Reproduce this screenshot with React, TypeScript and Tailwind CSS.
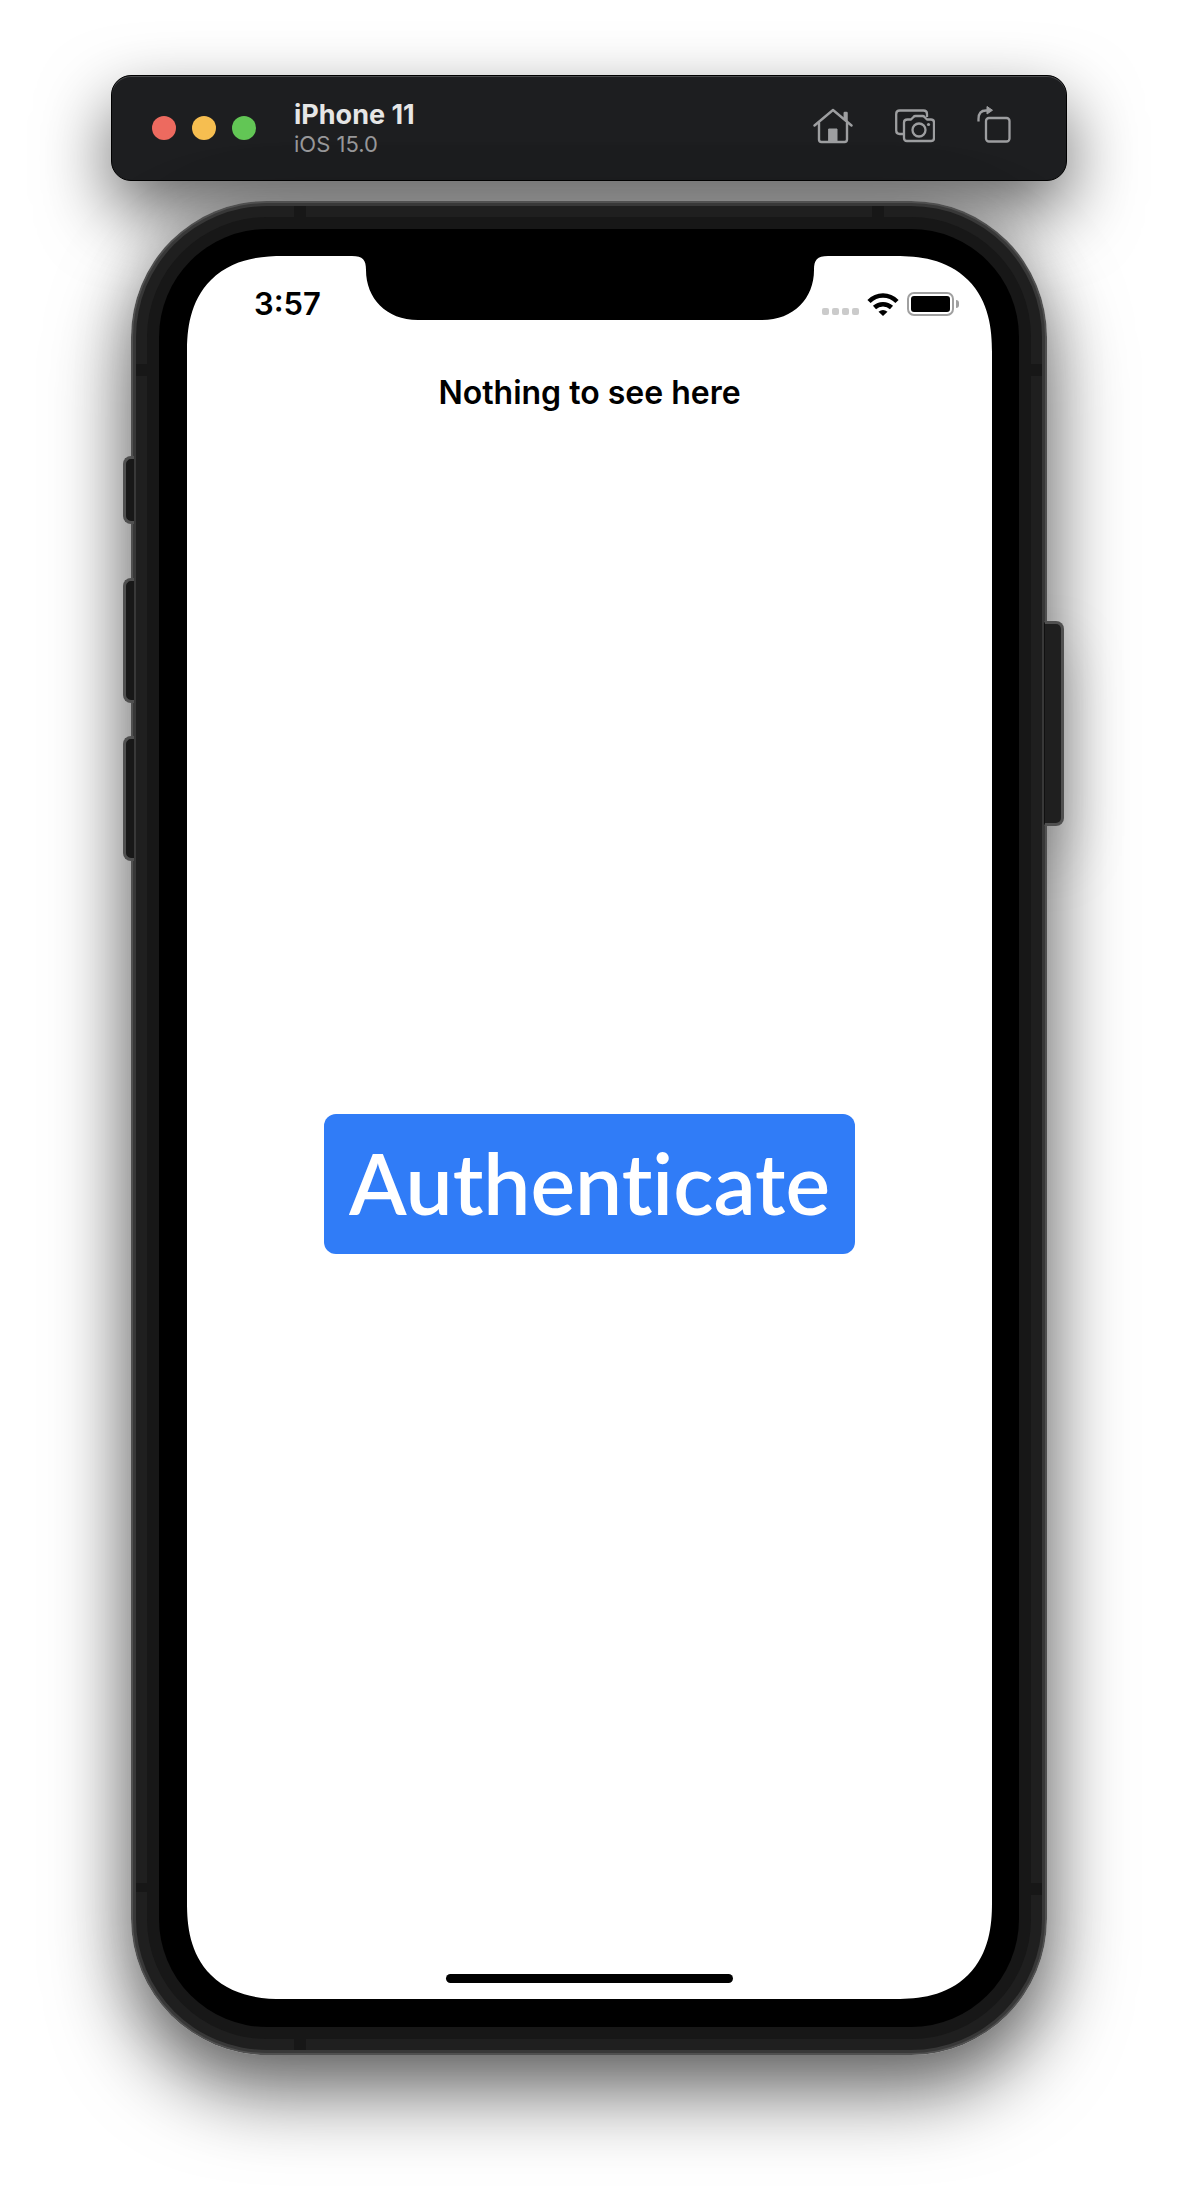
type IconProps = { className?: string };

function HomeIcon({ className }: IconProps) {
  return (
    <svg viewBox="0 0 40 36" className={className} fill="none" stroke="currentColor" strokeWidth="2.400" strokeLinecap="round" strokeLinejoin="round" aria-hidden="true">
      <path d="M1.500 17.500 20 2l18.500 15.500" />
      <path d="M6 15v16.500q0 2.500 2.500 2.500h23q2.500 0 2.500-2.500V15" />
      <path d="M31.800 10V5h1.700v7.500" strokeWidth="2.500" />
      <path d="M16 21h8v13h-8z" fill="currentColor" strokeWidth="1" />
    </svg>
  );
}

function CameraIcon({ className }: IconProps) {
  return (
    <svg viewBox="0 0 40 34" className={className} fill="none" stroke="currentColor" strokeWidth="2.300" strokeLinecap="butt" strokeLinejoin="round" aria-hidden="true">
      <path d="M8.500 25H4.800Q1.200 25 1.200 21.500V5q0-3.500 3.600-3.500h23.700Q32 1.500 32 5v3" />
      <path d="M12.500 10.500h3.500l2.500-2.500q.7-1 2-1h7q1.300 0 2 1l2.500 2.500H36q3 0 3 3V29q0 3-3 3H12q-3 0-3-3V13.500q0-3 3.500-3Z" />
      <circle cx="24" cy="21" r="6.500" />
      <circle cx="33.500" cy="15.500" r="1.600" fill="currentColor" stroke="none" />
    </svg>
  );
}

function RotateIcon({ className }: IconProps) {
  return (
    <svg viewBox="0 0 34 38" className={className} fill="none" stroke="currentColor" strokeWidth="2.300" strokeLinecap="butt" strokeLinejoin="round" aria-hidden="true">
      <path d="M1.500 16.500V14Q1.500 5.500 9 5.500h2" />
      <path d="M10 1.500v7.500l5.500-3.750Z" fill="currentColor" strokeWidth="1" />
      <rect x="9" y="13" width="23.500" height="23.500" rx="3" />
    </svg>
  );
}

function Toolbar() {
  return (
    <header className="relative flex h-[106px] items-center rounded-[20px] border border-black bg-[#1d1e20] pl-10 pr-[55px] shadow-[0_30px_70px_rgba(0,0,0,0.6),inset_0_1px_0_#4a4b4d]">
      <div className="flex gap-4">
        <button aria-label="Close" className="size-6 rounded-full bg-[#ed6a5f]" />
        <button aria-label="Minimize" className="size-6 rounded-full bg-[#f6be50]" />
        <button aria-label="Zoom" className="size-6 rounded-full bg-[#62c655]" />
      </div>
      <div className="ml-[38px] pt-[2px]">
        <h1 className="text-[27px] leading-[30px] font-bold text-[#e6e6e6]">iPhone 11</h1>
        <p className="text-[22px] leading-[28px] text-[#98989a]">iOS 15.0</p>
      </div>
      <div className="ml-auto flex items-center gap-[42px] pb-1 text-[#9d9ea0]">
        <button aria-label="Home"><HomeIcon className="h-9 w-10" /></button>
        <button aria-label="Screenshot"><CameraIcon className="h-[34px] w-10" /></button>
        <button aria-label="Rotate" className="pb-1"><RotateIcon className="h-[38px] w-[34px]" /></button>
      </div>
    </header>
  );
}

function Notch() {
  return (
    <svg viewBox="0 0 476 64" className="absolute top-0 left-1/2 h-16 w-[476px] -translate-x-1/2" aria-hidden="true">
      <path d="M0 0C11 0 14 4 14 14C14 42 34 64 66 64H410C442 64 462 42 462 14C462 4 465 0 476 0Z" />
    </svg>
  );
}

function WifiIcon() {
  return (
    <svg viewBox="0 0 32 23" className="h-[23px] w-8" fill="none" stroke="#000" strokeWidth="4.500" aria-hidden="true">
      <path d="M2 8.500Q8 2.500 16 2.500T30 8.500" />
      <path d="M7.500 14.500Q11 11.200 16 11.200T24.500 14.500" />
      <path d="M11.500 18.700Q16 15.500 20.500 18.700L16 23Z" fill="#000" stroke="none" />
    </svg>
  );
}

function StatusBar() {
  return (
    <div className="flex h-16 items-center justify-between pt-8 pr-[33px] pl-[67px]">
      <time className="text-[31px] leading-8 font-semibold">3:57</time>
      <div className="flex items-center">
        <div className="mt-[14px] mr-2 flex gap-[3px]" role="img" aria-label="No signal">
          <i className="size-[7px] rounded-[2px] bg-[#cbcbcb]" />
          <i className="size-[7px] rounded-[2px] bg-[#cbcbcb]" />
          <i className="size-[7px] rounded-[2px] bg-[#cbcbcb]" />
          <i className="size-[7px] rounded-[2px] bg-[#cbcbcb]" />
        </div>
        <WifiIcon />
        <div className="ml-2 h-6 w-[47px] rounded-[7px] border-2 border-[#a0a0a0] p-[2px]">
          <div className="size-full rounded-[3px] bg-black" />
        </div>
        <div className="ml-[2px] h-2 w-[3px] rounded-r-full bg-[#a0a0a0]" />
      </div>
    </div>
  );
}

function FrameDetails() {
  return (
    <div aria-hidden="true">
      <span className="absolute top-[5px] left-[163px] h-[11px] w-3 bg-[#171717]" />
      <span className="absolute top-[5px] right-[163px] h-[11px] w-3 bg-[#171717]" />
      <span className="absolute bottom-[5px] left-[163px] h-3 w-3 bg-[#171717]" />
      <span className="absolute top-[163px] left-[5px] h-3 w-[11px] bg-[#171717]" />
      <span className="absolute top-[163px] right-[5px] h-3 w-[11px] bg-[#171717]" />
      <span className="absolute bottom-[163px] left-[5px] h-[9px] w-[11px] bg-[#171717]" />
      <span className="absolute right-[5px] bottom-[160px] h-3 w-[11px] bg-[#171717]" />
    </div>
  );
}

function SideButtons() {
  return (
    <div aria-hidden="true">
      <span className="absolute top-[255px] -left-2 h-[68px] w-[11px] rounded-l-[8px] border-[3px] border-r-0 border-[#505050] bg-[#181818]" />
      <span className="absolute top-[377px] -left-2 h-[125px] w-[11px] rounded-l-[8px] border-[3px] border-r-0 border-[#505050] bg-[#181818]" />
      <span className="absolute top-[535px] -left-2 h-[125px] w-[11px] rounded-l-[8px] border-[3px] border-r-0 border-[#505050] bg-[#181818]" />
      <span className="absolute top-[420px] -right-[17px] h-[205px] w-5 rounded-r-[8px] border-[3px] border-l border-[#505050] border-l-[#101010] bg-[#1f1f1f]" />
    </div>
  );
}

function Screen() {
  return (
    <main className="relative flex min-h-[1743px] flex-col overflow-hidden rounded-[96px] bg-white [corner-shape:superellipse(1.27)]">
      <Notch />
      <StatusBar />
      <h2 className="mt-[53px] text-center text-[32px] leading-10 font-semibold">Nothing to see here</h2>
      <div className="flex flex-1 items-center justify-center pb-5">
        <button className="h-[140px] rounded-xl bg-[#307cf7] px-[25px] pb-[2px] font-['Lato',sans-serif] text-[84px] leading-none font-semibold text-white [font-variant-ligatures:none]">
          Authenticate
        </button>
      </div>
      <div className="mx-auto mb-4 h-[9px] w-[287px] rounded-full bg-black" />
    </main>
  );
}

function Phone() {
  return (
    <div className="relative mx-5 mt-5">
      <div className="absolute inset-0 rounded-[136px] shadow-[0_36px_80px_rgba(0,0,0,0.6),0_0_60px_rgba(0,0,0,0.15)]" />
      <div className="absolute top-[419px] -right-3 h-[206px] w-5 shadow-[0_30px_60px_rgba(0,0,0,0.4)]" />
      <div className="relative rounded-[136px] bg-[#505050] p-[2px]">
        <div className="rounded-[134px] bg-[#383838] p-[3px]">
          <div className="rounded-[131px] bg-[#1f1f1f] p-[11px]">
            <div className="rounded-[120px] bg-[#171717] p-3">
              <div className="rounded-[108px] bg-black pt-[27px] pr-[27px] pb-7 pl-7">
                <Screen />
              </div>
            </div>
          </div>
        </div>
        <FrameDetails />
      </div>
      <SideButtons />
    </div>
  );
}

export default function App() {
  return (
    <div className="min-h-screen overflow-hidden bg-white px-[111px] pt-[75px] pb-[149px] font-['Inter',sans-serif] text-black">
      <Toolbar />
      <Phone />
    </div>
  );
}
